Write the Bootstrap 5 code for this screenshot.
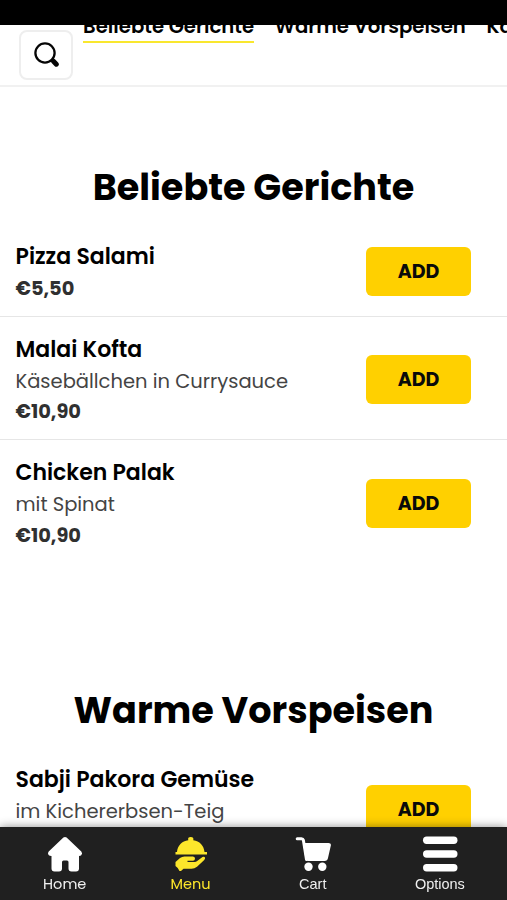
<!DOCTYPE html>
<html lang="de">
<head>
<meta charset="utf-8">
<meta name="viewport" content="width=device-width, initial-scale=1">
<title>Menu</title>
<link href="https://cdn.jsdelivr.net/npm/bootstrap@5.3.0/dist/css/bootstrap.min.css" rel="stylesheet">
<style>
body{font-family:Poppins,Inter,"Open Sans",sans-serif;color:#000;height:900px;background:#fff}
.status-strip{height:25px;z-index:2}
.top-bar{height:62px;border-bottom:2px solid #f1f1f1;padding-left:19px}
.search-btn{width:54px;height:50px;margin-top:5px;border:2px solid #eee;border-radius:8px}
.tabs-strip{margin-left:10px;gap:20.7px;font-size:19.7px;font-weight:600;line-height:30px;margin-top:-14px}
.tab-item{height:32px;border-bottom:2px solid transparent}
.tab-item.current{border-color:#f9e72e}
.section-title{font-size:36.6px;font-weight:700;line-height:56px;margin:0;padding:73px 0 8px}
.section-title.later{padding:119px 0 8px}
.dish{padding:16px 36px 12px 15.5px;border-bottom:1px solid #e6e6e6}
.dish.last-dish{border-color:transparent}
.dish-name{font-size:22px;font-weight:600;line-height:33px;margin:0}
.dish-text{font-size:19.5px;padding-top:1px;line-height:29.4px;color:#444;font-weight:400}
.dish-price{font-size:19.4px;line-height:31px;color:#303030;font-weight:700}
.add-btn,.add-btn:hover{width:105px;height:49px;margin-bottom:.8px;padding:1px 0 0;background:#ffd000;border:0;border-radius:6px;font-size:19px;line-height:48px;font-weight:700;color:#0a0a0a}
.bottom-nav{height:73.5px;padding-left:1px;background:#202020;box-shadow:0 0 9px rgba(0,0,0,.45)}
.nav-entry{padding-top:9.5px;font-size:14.5px;line-height:18px;color:#f0f0f0}
.nav-entry svg{margin-bottom:3px}
.nav-entry.current{color:#fce62b}
.helv{font-family:"Liberation Sans",Arial,sans-serif}
</style>
<script src="https://cdn.jsdelivr.net/npm/bootstrap@5.3.0/dist/js/bootstrap.bundle.min.js"></script>
</head>
<body class="overflow-hidden">
<div class="status-strip bg-black position-relative"></div>
<header class="top-bar d-flex align-items-start overflow-hidden">
  <button class="search-btn bg-white p-0 flex-shrink-0 d-flex align-items-center justify-content-center" aria-label="Suche">
    <svg width="26" height="26" viewBox="0 0 26 26" fill="none" stroke="#050505"><circle cx="12" cy="11" r="9.6" stroke-width="2.3"/><path d="M18 17.500l2 2" stroke-width="3"/><path d="M20.700 19.500l2.600 2.700" stroke-width="5" stroke-linecap="round"/></svg>
  </button>
  <nav class="tabs-strip d-flex text-nowrap">
    <div class="tab-item current">Beliebte Gerichte</div>
    <div class="tab-item">Warme Vorspeisen</div>
    <div class="tab-item">Kalte Vorspeisen</div>
  </nav>
</header>
<main>
  <section>
    <h2 class="section-title text-center">Beliebte Gerichte</h2>
    <div class="dish d-flex justify-content-between align-items-center">
      <div><h3 class="dish-name">Pizza Salami</h3><div class="dish-price">€5,50</div></div>
      <button class="btn add-btn">ADD</button>
    </div>
    <div class="dish d-flex justify-content-between align-items-center">
      <div><h3 class="dish-name">Malai Kofta</h3><div class="dish-text">Käsebällchen in Currysauce</div><div class="dish-price">€10,90</div></div>
      <button class="btn add-btn">ADD</button>
    </div>
    <div class="dish last-dish d-flex justify-content-between align-items-center">
      <div><h3 class="dish-name">Chicken Palak</h3><div class="dish-text">mit Spinat</div><div class="dish-price">€10,90</div></div>
      <button class="btn add-btn">ADD</button>
    </div>
  </section>
  <section>
    <h2 class="section-title later text-center">Warme Vorspeisen</h2>
    <div class="dish last-dish d-flex justify-content-between align-items-center">
      <div><h3 class="dish-name">Sabji Pakora Gemüse</h3><div class="dish-text">im Kichererbsen-Teig</div><div class="dish-price">€5,90</div></div>
      <button class="btn add-btn">ADD</button>
    </div>
  </section>
</main>
<nav class="bottom-nav fixed-bottom d-flex justify-content-around text-center">
  <div class="nav-entry d-flex flex-column align-items-center">
    <svg width="36" height="36" viewBox="0 0 36 36" fill="#fff"><path d="M16.400 1.600Q18 .200 19.600 1.600L34.300 15.400Q36 17.300 34.200 19.200Q33.500 20 32 20V32.500Q32 35.500 29 35.500H24.500Q21.500 35.500 21.500 32.500V26Q21.500 24.500 20 24.500H16.500Q15 24.500 15 26V32.500Q15 35.500 12 35.500H7.500Q4.500 35.500 4.500 32.500V20Q2.500 20 1.600 19Q.200 17.200 1.700 15.400Z"/></svg>
    <span>Home</span>
  </div>
  <div class="nav-entry current d-flex flex-column align-items-center">
    <svg width="36" height="36" viewBox="0 0 36 36" fill="currentColor"><path d="M4 16C4.500 9.500 9 5 15.300 4.200Q14.400 1 17.700 1T20.300 4.200C26.500 5 31 9.500 31.500 16H34V18.500H2.500V16Z"/><path d="M2.500 26L7 22Q9 20.500 11.500 20.500H20Q22.200 20.700 22 22.700T20 24.700H14.500V26H21.500Q23 26 24.500 24.700L29.500 21Q31.300 20.200 32 21.500Q32.500 22.700 31 24.200L24 30.700Q21.500 32.700 18.500 32.700H10.500L8 35H6.500Q5.500 32 2.500 30Z"/></svg>
    <span>Menu</span>
  </div>
  <div class="nav-entry d-flex flex-column align-items-center">
    <svg width="36" height="36" viewBox="0 0 36 36" fill="#fff"><path d="M2.200 2.700H6.500Q8 2.700 8.400 4.200L11.500 23.500" fill="none" stroke="#fff" stroke-width="3" stroke-linecap="round"/><path d="M8 7H33.500Q36.200 7 35.900 9.200L33 22Q32.500 25 29.500 25H13.500Q10.800 25 10.300 22Z"/><circle cx="13.500" cy="30.700" r="4.200"/><circle cx="27.300" cy="30.700" r="4.200"/></svg>
    <span class="helv">Cart</span>
  </div>
  <div class="nav-entry d-flex flex-column align-items-center">
    <svg width="36" height="36" viewBox="0 0 36 36" fill="#fff"><rect x="1" y=".500" width="34.500" height="7.500" rx="3.700"/><rect x="1" y="14.200" width="34.500" height="7.500" rx="3.700"/><rect x="1" y="28" width="34.500" height="7.500" rx="3.700"/></svg>
    <span class="helv">Options</span>
  </div>
</nav>
</body>
</html>
